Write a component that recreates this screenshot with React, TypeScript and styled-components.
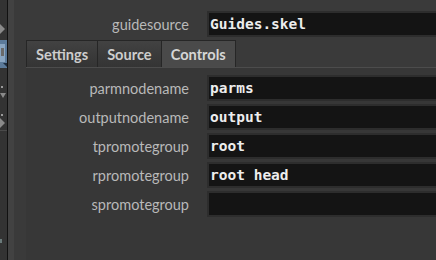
import * as React from 'react';
import styled, { createGlobalStyle } from 'styled-components';

const Global = createGlobalStyle`
  html, body {
    margin: 0;
    padding: 0;
    background: #3a3a3a;
  }
`;

const Page = styled.div`
  display: flex;
  width: 436px;
  height: 260px;
  overflow: hidden;
  background: #3a3a3a;
  font-family: Lato, "Liberation Sans", sans-serif;
`;

const SideStrip = styled.div`
  width: 7px;
  flex: none;
  background: #333333;
  border-right: 1px solid #111111;
`;

const Gutter = styled.div`
  width: 6px;
  flex: none;
  background: #424242;
`;

const Main = styled.div`
  flex: 1;
  display: flex;
  flex-direction: column;
  padding: 11px 0 0 12px;
  min-width: 0;
`;

const Row = styled.div`
  display: flex;
  align-items: center;
  height: 26px;
  gap: 18px;
`;

const Label = styled.div`
  width: 163px;
  flex: none;
  text-align: right;
  font-size: 14.5px;
  color: #b9b9b9;
  white-space: nowrap;
`;

const Field = styled.div`
  flex: 1;
  height: 26px;
  box-sizing: border-box;
  margin-right: -20px;
  border: 2px solid #2d2d2d;
  background: #141414;
  padding: 0 0 0 1px;
  display: flex;
  align-items: center;
  font-family: "DejaVu Sans Mono", "Liberation Mono", monospace;
  font-weight: bold;
  font-size: 14.5px;
  color: #ededed;
  white-space: pre;
`;

const TabBar = styled.div`
  display: flex;
  margin-top: 3px;
  height: 27px;
  border-bottom: 1px solid #4c4c4c;
`;

const Tab = styled.div<{ $active?: boolean }>`
  display: flex;
  align-items: center;
  padding: 1px 9px 0;
  box-sizing: border-box;
  height: 27px;
  border: 1px solid #262626;
  border-bottom: none;
  background: ${(p) =>
    p.$active ? '#4a4a4a' : 'linear-gradient(#424242, #343434)'};
  font-weight: bold;
  font-size: 14.6px;
  color: ${(p) => (p.$active ? '#d6d6d6' : '#cdcdcd')};
  & + & {
    border-left: none;
  }
`;

const TabBody = styled.div`
  flex: 1;
  display: flex;
  flex-direction: column;
  gap: 3px;
  padding-top: 7px;
  background: #373737;
`;

const SideIcons = () => (
  <svg width="7" height="260" viewBox="0 0 7 260">
    <polygon points="0,24 5,29 0,34" fill="#8a8a8a" />
    <rect x="0" y="40" width="7" height="28" fill="#5b7a9a" />
    <rect x="0" y="44" width="5" height="18" fill="#8aa6c2" />
    <rect x="1" y="48" width="3" height="8" fill="#6a6a6a" />
    <polygon points="3,63 7,63 7,67" fill="#1d2d3f" />
    <rect x="1" y="86" width="2" height="2" fill="#9a9a9a" />
    <polygon points="0,93 6,93 3,98" fill="#8a8a8a" />
    <rect x="1" y="114" width="2" height="2" fill="#9a9a9a" />
    <polygon points="0,118 5,123 0,128" fill="#8a8a8a" />
    <rect x="0" y="130" width="7" height="1" fill="#4a4a4a" />
    <rect x="0" y="239" width="2" height="4" fill="#6a7a7a" />
  </svg>
);

const fields: [string, string][] = [
  ['parmnodename', 'parms'],
  ['outputnodename', 'output'],
  ['tpromotegroup', 'root'],
  ['rpromotegroup', 'root head'],
  ['spromotegroup', ''],
];

export default function App() {
  return (
    <>
      <Global />
      <Page>
        <SideStrip>
          <SideIcons />
        </SideStrip>
        <Gutter />
        <Main>
          <Row>
            <Label>guidesource</Label>
            <Field>Guides.skel</Field>
          </Row>
          <TabBar>
            <Tab>Settings</Tab>
            <Tab>Source</Tab>
            <Tab $active>Controls</Tab>
          </TabBar>
          <TabBody>
            {fields.map(([label, value]) => (
              <Row key={label}>
                <Label>{label}</Label>
                <Field>{value}</Field>
              </Row>
            ))}
          </TabBody>
        </Main>
      </Page>
    </>
  );
}
